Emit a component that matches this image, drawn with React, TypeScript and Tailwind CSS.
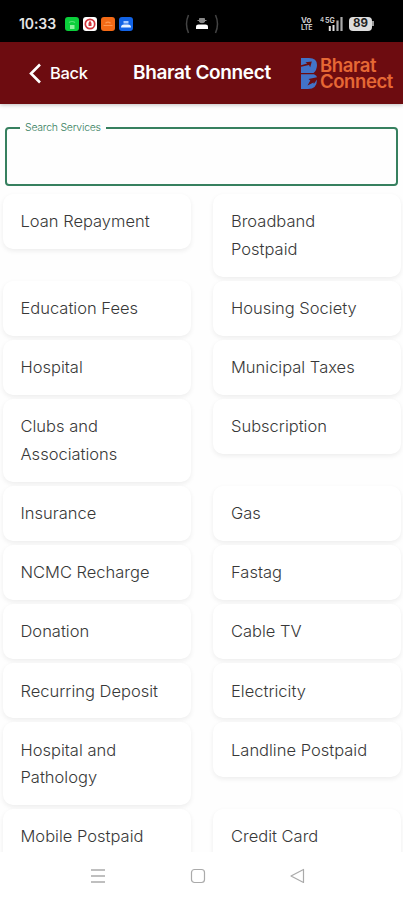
import React from 'react'

const services: [string, string][] = [
  ['Loan Repayment', 'Broadband Postpaid'],
  ['Education Fees', 'Housing Society'],
  ['Hospital', 'Municipal Taxes'],
  ['Clubs and Associations', 'Subscription'],
  ['Insurance', 'Gas'],
  ['NCMC Recharge', 'Fastag'],
  ['Donation', 'Cable TV'],
  ['Recurring Deposit', 'Electricity'],
  ['Hospital and Pathology', 'Landline Postpaid'],
  ['Mobile Postpaid', 'Credit Card'],
]

const StatusBar = () => (
  <div className="flex h-[42px] shrink-0 items-center bg-black pt-[5px] text-white">
    <span className="ml-[19px] w-[46px] text-[14px] font-semibold leading-none tracking-[-0.1px] text-[#e4e4e4]">10:33</span>
    <div className="flex gap-[4px]">
      <svg width="14" height="14" viewBox="0 0 14 14">
        <rect width="14" height="14" rx="3" fill="#0bcf3b" />
        <path d="M4 5.5Q7 3.5 10 5.5" stroke="#5be476" strokeWidth="1.2" fill="none" />
        <path d="M5 8h4.500v4H5z" fill="#8df29c" />
      </svg>
      <svg width="14" height="14" viewBox="0 0 14 14">
        <rect width="14" height="14" rx="3" fill="#fff" />
        <circle cx="7" cy="7" r="4.7" stroke="#d3353c" strokeWidth="1.7" fill="none" />
        <path d="M7 3.5L8.5 6V9H5.500V6Z" fill="#d3353c" />
      </svg>
      <svg width="14" height="14" viewBox="0 0 14 14">
        <rect width="14" height="14" rx="3" fill="#f36a16" />
        <path d="M4.5 6.2Q7 4 9.500 6.200M2.500 8.500h9" stroke="#ff9850" strokeWidth="1.2" fill="none" />
      </svg>
      <svg width="14" height="14" viewBox="0 0 14 14">
        <rect width="14" height="14" rx="3" fill="#1263e6" />
        <path d="M4.5 4h5v2.500h-5z" fill="#a9cbff" />
        <path d="M2 10.500Q2 7.500 5 7.500H9Q12 7.500 12 10.500Z" fill="#e8f3ff" />
      </svg>
    </div>
    <svg className="ml-[51px]" width="36" height="22" viewBox="0 0 36 22">
      <path d="M4.5 2Q0.5 11 4.5 20M31.5 2Q35.5 11 31.5 20" stroke="#444" strokeWidth="1.5" fill="none" />
      <path d="M12 16v-2.500q0-2 2.500-2h7q2.500 0 2.500 2v2.500z" fill="#fff" />
      <path d="M13.5 7.500h9M15.500 5.500h5v3.500q-2.500 1.500-5 0z" stroke="#888" fill="#888" />
    </svg>
    <div className="ml-[81px] flex w-[13px] flex-col text-[8px] font-bold leading-[7px] tracking-[0px] text-[#ccc]">
      <span>Vo</span>
      <span className="text-[7px] tracking-[-0.4px]">LTE</span>
    </div>
    <svg className="ml-[6px]" width="24" height="16" viewBox="0 0 24 16">
      <text x="0" y="6" fontSize="6" fontWeight="700" fill="#bbb" fontFamily="Inter">4</text>
      <text x="5" y="7" fontSize="7" fontWeight="700" fill="#ccc" fontFamily="Inter">5G</text>
      <path d="M9.8 15V10M13.500 15V9" stroke="#e0e0e0" strokeWidth="2" />
      <path d="M17.500 15V4.500M21.500 15V1" stroke="#aaa" strokeWidth="2.200" />
    </svg>
    <div className="ml-[5px] flex h-[14px] w-[23px] items-center justify-center rounded-[4px] bg-[#ddd] text-[11.5px] font-bold leading-none text-[#222]">89</div>
    <div className="h-[5px] w-[1.5px] bg-[#999]" />
  </div>
)

const Header = () => (
  <header className="z-10 flex h-[62px] shrink-0 items-center bg-[#6d0c10] text-white shadow-[0_1px_4px_rgba(0,0,0,0.25)]">
    <svg className="ml-[29px]" width="13" height="21" viewBox="0 0 13 21">
      <path d="M11 1.500L2 10.500L11 19.500" stroke="#fff" strokeWidth="2.600" fill="none" />
    </svg>
    <span className="ml-[8px] w-[83px] pt-[1px] text-[16.5px] font-medium tracking-[-0.3px]">Back</span>
    <h1 className="w-[168px] whitespace-nowrap pt-[1px] text-[19px] font-semibold tracking-[-0.35px]">Bharat Connect</h1>
    <svg width="17" height="33" viewBox="0 0 17 33">
      <path d="M0 1H8Q16 1 16 8Q16 13 12.500 16H0V9.800L8 8L9.200 10.200L10.800 4.600L4.500 5.200L6.200 6.500L0 8.300Z" fill="#4273c8" />
      <path d="M0 17.200H13Q16 18.500 16 20.300L7.500 22L9.300 23.500L6.500 28.500L12.500 25.500L12.800 27L16 22.500Q16 32 7 32H0Z" fill="#4273c8" />
    </svg>
    <div className="ml-[2px] flex flex-col text-[18.5px] font-semibold leading-[16px] tracking-[-0.4px] text-[#e66835]">
      <span>Bharat</span>
      <span>Connect</span>
    </div>
  </header>
)

const ServiceCard = ({ name }: { name: string }) => (
  <div className="rounded-[10px] bg-white pb-[12.8px] pl-[18px] pr-[20px] pt-[14.4px] text-[16.5px] font-light leading-[27.8px] text-[#383838] shadow-[0_2px_5px_rgba(0,0,0,0.07)]">
    {name}
  </div>
)

const NavBar = () => (
  <nav className="z-10 flex h-[48px] shrink-0 items-center gap-[84px] bg-white pl-[90px] text-[#aaa]">
    <svg width="16" height="16" viewBox="0 0 16 16" stroke="currentColor" strokeWidth="1.3">
      <path d="M1 2H15M1 8H15M1 14H15" />
    </svg>
    <svg width="16" height="16" viewBox="0 0 16 16" stroke="currentColor" strokeWidth="1.2" fill="none">
      <rect x="1.5" y="1.5" width="13" height="13" rx="3" />
    </svg>
    <svg width="16" height="16" viewBox="0 0 16 16" stroke="currentColor" strokeWidth="1.2" fill="none" strokeLinejoin="round">
      <path d="M1 8L13.500 1.500V14.500Z" />
    </svg>
  </nav>
)

export default function App() {
  return (
    <div className="flex h-[900px] w-[403px] flex-col overflow-hidden bg-[#fefefe] font-['Inter',sans-serif]">
      <StatusBar />
      <Header />
      <main className="min-h-0 flex-1 overflow-hidden">
        <fieldset className="mx-[5px] mt-[17px] h-[65px] rounded-[4px] border-2 border-[#36805f] pl-[13px]">
          <legend className="h-[14px] px-[5px] text-[10.5px] font-light leading-[14px] tracking-[-0.25px] text-[#36805f]">Search Services</legend>
          <input aria-label="Search Services" className="w-full outline-none" />
        </fieldset>
        <div className="mt-[8px] grid grid-cols-[188px_188px] items-start gap-x-[22.5px] gap-y-[4.1px] pl-[2.5px]">
          {services.flat().map((name) => (
            <ServiceCard key={name} name={name} />
          ))}
        </div>
      </main>
      <NavBar />
    </div>
  )
}
